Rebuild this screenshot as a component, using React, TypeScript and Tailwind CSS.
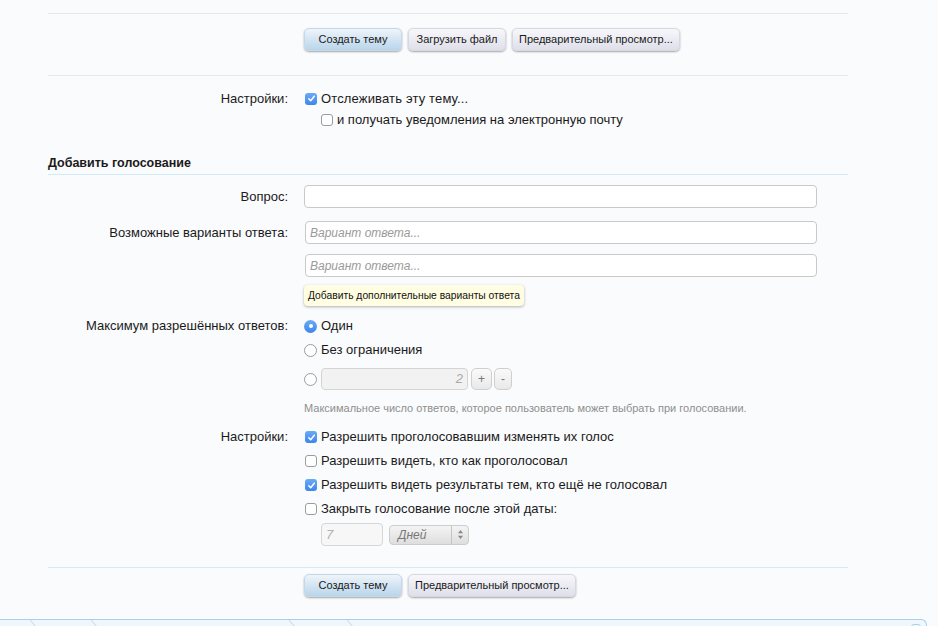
import React from "react";

const FONT = { fontFamily: '"Liberation Sans", Arial, sans-serif' };

function Btn({ children, primary }: { children: React.ReactNode; primary?: boolean }) {
  return (
    <button
      className={
        primary
          ? "h-[23px] min-w-[98px] px-[6px] rounded-[5px] text-[11px] text-[#1a1a1a] bg-[linear-gradient(to_bottom,#eef4fa,#b9d5eb)] shadow-[0_1px_2px_rgba(0,0,0,0.35)] border border-[#c5d8e8]"
          : "h-[23px] min-w-[98px] px-[6px] rounded-[5px] text-[11px] text-[#1a1a1a] bg-[linear-gradient(to_bottom,#f7f7fb,#dfdfea)] shadow-[0_1px_2px_rgba(0,0,0,0.35)] border border-[#d8d8e2]"
      }
    >
      {children}
    </button>
  );
}

function Check({ checked }: { checked?: boolean }) {
  return checked ? (
    <span className="w-[12px] h-[12px] rounded-[3px] bg-[linear-gradient(to_bottom,#6aaaf5,#3d86ec)] flex items-center justify-center shrink-0">
      <svg width="9" height="9" viewBox="0 0 9 9">
        <path d="M1.8 4.8 L3.7 6.7 L7.3 2.2" stroke="white" strokeWidth="1.5" fill="none" strokeLinecap="round" strokeLinejoin="round" />
      </svg>
    </span>
  ) : (
    <span className="w-[12px] h-[12px] rounded-[3px] bg-white border border-[#9c9c9c] shrink-0" />
  );
}

function Radio({ checked }: { checked?: boolean }) {
  return checked ? (
    <span className="w-[13px] h-[13px] rounded-full bg-[linear-gradient(to_bottom,#6aaaf5,#3d86ec)] flex items-center justify-center shrink-0">
      <span className="w-[4px] h-[4px] rounded-full bg-white" />
    </span>
  ) : (
    <span className="w-[13px] h-[13px] rounded-full bg-white border border-[#9c9c9c] shrink-0" />
  );
}

function Label({ children }: { children?: React.ReactNode }) {
  return <div className="w-[240px] shrink-0 text-right pr-0 text-[13px] text-[#1a1a1a]">{children}</div>;
}

export default function App() {
  return (
    <div className="w-[938px] h-[626px] bg-[#fafbfd] overflow-hidden text-[#1a1a1a]" style={FONT}>
      <div className="ml-[48px] w-[800px]">
        <div className="h-[13px]" />
        <div className="border-t border-[#e2e9f0]" />
        {/* top buttons */}
        <div className="flex mt-[14px] pl-[256px] gap-[6px]">
          <Btn primary>Создать тему</Btn>
          <Btn>Загрузить файл</Btn>
          <Btn>Предварительный просмотр...</Btn>
        </div>
        <div className="mt-[24px] border-t border-[#e2e9f0]" />

        {/* settings 1 */}
        <div className="mt-[12px] flex h-[21px] items-center">
          <Label>Настройки:</Label>
          <div className="ml-[17px] flex items-center gap-[4px] text-[13px]">
            <Check checked />
            <span className="tracking-[0.15px]">Отслеживать эту тему...</span>
          </div>
        </div>
        <div className="flex h-[21px] items-center">
          <Label />
          <div className="ml-[33px] flex items-center gap-[4px] text-[13px]">
            <Check />
            <span>и получать уведомления на электронную почту</span>
          </div>
        </div>

        {/* heading */}
        <div className="mt-[24px] pb-[2px] border-b border-[#d3eaf9]">
          <div className="text-[12.5px] font-bold leading-[18px]">Добавить голосование</div>
        </div>

        {/* question */}
        <div className="mt-[10px] flex items-center">
          <Label>Вопрос:</Label>
          <div className="ml-[16px] w-[513px] h-[23px] rounded-[4px] border border-[#c9c9c9] bg-white" />
        </div>

        {/* options */}
        <div className="mt-[13px] flex items-start">
          <div className="h-[23px] flex items-center">
            <Label>Возможные варианты ответа:</Label>
          </div>
          <div className="ml-[17px] flex flex-col">
            <div className="w-[512px] h-[23px] rounded-[4px] border border-[#c9c9c9] bg-white flex items-center px-[4px] text-[12px] italic text-[#9a9a9a]">
              Вариант ответа...
            </div>
            <div className="mt-[10px] w-[512px] h-[23px] rounded-[4px] border border-[#c9c9c9] bg-white flex items-center px-[4px] text-[12px] italic text-[#9a9a9a]">
              Вариант ответа...
            </div>
            <div className="mt-[8px] -ml-[1px] w-fit h-[21px] px-[4px] rounded-[4px] bg-[#fffde2] shadow-[0_1px_3px_rgba(0,0,0,0.3)] flex items-center text-[10.3px] text-[#111]">
              Добавить дополнительные варианты ответа
            </div>
          </div>
        </div>

        {/* max answers */}
        <div className="mt-[8px] flex items-start">
          <div className="h-[24px] flex items-center">
            <Label>Максимум разрешённых ответов:</Label>
          </div>
          <div className="ml-[16px] flex flex-col text-[13px]">
            <div className="h-[24px] flex items-center gap-[4px]">
              <Radio checked />
              <span>Один</span>
            </div>
            <div className="h-[24px] flex items-center gap-[4px]">
              <Radio />
              <span>Без ограничения</span>
            </div>
            <div className="mt-[6px] h-[22px] flex items-center">
              <Radio />
              <div className="ml-[4px] w-[147px] h-[22px] rounded-[4px] border border-[#d4d4d4] bg-[#f2f2f2] flex items-center justify-end pr-[4px] text-[13px] italic text-[#a8a8a8]">
                2
              </div>
              <div className="ml-[3px] w-[21px] h-[22px] rounded-[5px] border border-[#cfcfcf] bg-[linear-gradient(to_bottom,#fafafa,#e9e9e9)] flex items-center justify-center text-[12px] text-[#777]">
                +
              </div>
              <div className="ml-[2px] w-[18px] h-[22px] rounded-[5px] border border-[#cfcfcf] bg-[linear-gradient(to_bottom,#fafafa,#e9e9e9)] flex items-center justify-center text-[12px] text-[#777]">
                -
              </div>
            </div>
            <div className="mt-[11px] text-[11px] leading-[14px] text-[#8f8f8f]">
              Максимальное число ответов, которое пользователь может выбрать при голосовании.
            </div>
          </div>
        </div>

        {/* settings 2 */}
        <div className="mt-[10px] flex items-start">
          <div className="h-[24px] flex items-center">
            <Label>Настройки:</Label>
          </div>
          <div className="ml-[17px] flex flex-col text-[13px]">
            <div className="h-[24px] flex items-center gap-[4px]">
              <Check checked />
              <span>Разрешить проголосовавшим изменять их голос</span>
            </div>
            <div className="h-[24px] flex items-center gap-[4px]">
              <Check />
              <span>Разрешить видеть, кто как проголосовал</span>
            </div>
            <div className="h-[24px] flex items-center gap-[4px]">
              <Check checked />
              <span>Разрешить видеть результаты тем, кто ещё не голосовал</span>
            </div>
            <div className="h-[24px] flex items-center gap-[4px]">
              <Check />
              <span>Закрыть голосование после этой даты:</span>
            </div>
            <div className="mt-[2px] ml-[16px] flex items-center">
              <div className="w-[62px] h-[23px] rounded-[4px] border border-[#d6d6d6] bg-[#f7f7f7] flex items-center pl-[4px] text-[13px] italic text-[#b0b0b0]">
                7
              </div>
              <div className="ml-[6px] w-[80px] h-[20px] rounded-[4px] border border-[#cdcdcd] bg-[linear-gradient(to_bottom,#f4f4f4,#dedede)] flex items-center">
                <span className="flex-1 pl-[8px] text-[12px] italic text-[#777]">Дней</span>
                <span className="w-px h-full bg-[#c4c4c4]" />
                <span className="w-[16px] flex items-center justify-center">
                  <svg width="7" height="11" viewBox="0 0 7 11">
                    <path d="M3.5 1 L6 4.3 H1 Z" fill="#888" />
                    <path d="M3.5 10 L6 6.7 H1 Z" fill="#888" />
                  </svg>
                </span>
              </div>
            </div>
          </div>
        </div>

        <div className="mt-[21px] border-t border-[#d3eaf9]" />
        <div className="flex mt-[6px] pl-[256px] gap-[6px]">
          <Btn primary>Создать тему</Btn>
          <Btn>Предварительный просмотр...</Btn>
        </div>
      </div>

      {/* bottom breadcrumb bar */}
      <div className="mt-[22px] w-[927px] h-[10px] border-t border-r border-[#a9cfe9] rounded-tr-[6px] bg-[#f0f7fc] flex relative">
        <div className="w-[30px]" />
        <svg width="7" height="8" viewBox="0 0 7 8"><path d="M0 0 L7 8" stroke="#b9d7ee" strokeWidth="1" /></svg>
        <div className="w-[54px]" />
        <svg width="7" height="8" viewBox="0 0 7 8"><path d="M0 0 L7 8" stroke="#b9d7ee" strokeWidth="1" /></svg>
        <div className="w-[191px]" />
        <svg width="7" height="8" viewBox="0 0 7 8"><path d="M0 0 L7 8" stroke="#b9d7ee" strokeWidth="1" /></svg>
        <div className="w-[51px]" />
        <svg width="7" height="8" viewBox="0 0 7 8"><path d="M0 0 L7 8" stroke="#b9d7ee" strokeWidth="1" /></svg>
        <div className="absolute right-[5px] top-[4px] w-[10px] h-[8px] rounded-[3px] border border-[#a9cfe9]" />
      </div>
    </div>
  );
}
